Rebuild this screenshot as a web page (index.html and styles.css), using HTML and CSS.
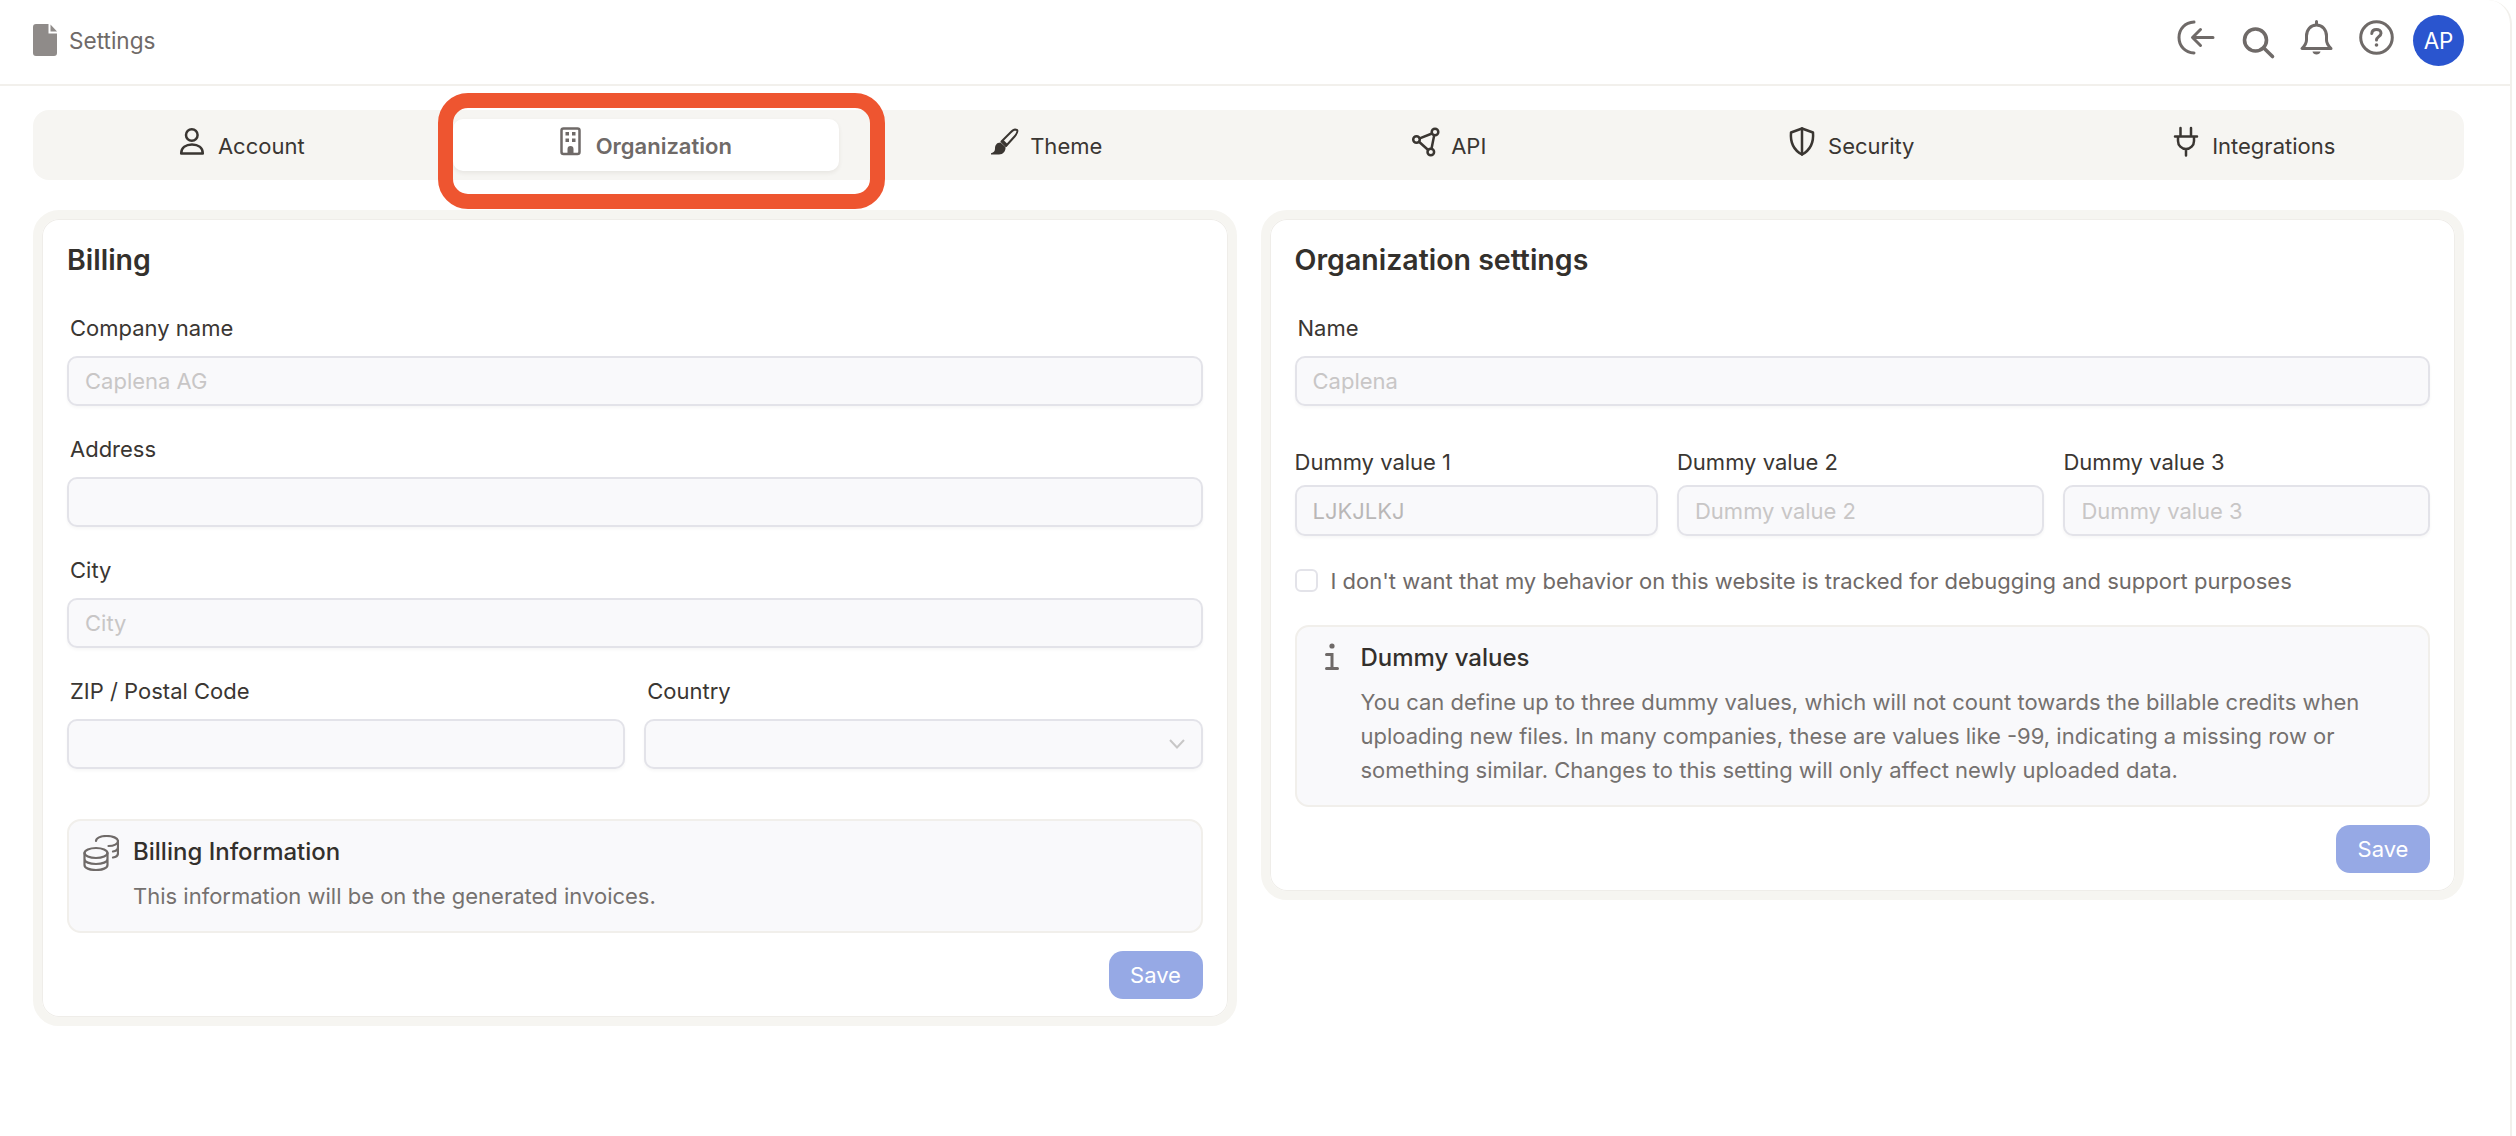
FILE: index.html
```html
<!DOCTYPE html>
<html lang="en">
<head>
  <meta charset="UTF-8">
  <meta name="viewport" content="width=device-width, initial-scale=1.0">
  <title>Settings</title>
  <link rel="stylesheet" href="styles.css">
</head>
<body>
  <div class="app">
    <header class="topbar">
      <div class="crumb">
        <svg class="doc-icon" width="24" height="32" viewBox="0 0 24 32"><path d="M3 0H15.500V9.500H24V29A3 3 0 0 1 21 32H3A3 3 0 0 1 0 29V3A3 3 0 0 1 3 0Z"/><path d="M17.500 0.500L24 7.500H17.500Z"/></svg>
        <span>Settings</span>
      </div>
      <div class="top-actions">
        <svg class="top-icon" width="40" height="40" viewBox="0 0 40 40"><path d="M18 2C9 2.500 3 9 3 17.500S9 32.500 18 33"/><path d="M37 17.500H17M24.500 9.500L16.500 17.500L24.500 25.500"/></svg>
        <svg class="top-icon search-icon" width="40" height="40" viewBox="0 0 40 40"><circle cx="19.500" cy="20" r="11"/><path d="M27.800 28L36.500 36.500"/></svg>
        <svg class="top-icon" width="40" height="40" viewBox="0 0 40 40"><path d="M20.500 1.500V5M20.500 5C14.500 5 10.500 10 10.500 16V20C10.500 24 8.500 26 6 28.500H35C32.500 26 30.500 24 30.500 20V16C30.500 10 26.500 5 20.500 5Z"/><path class="solid" d="M16.500 31.500H24.500C24 35.500 17 35.500 16.500 31.500Z"/></svg>
        <svg class="top-icon" width="40" height="40" viewBox="0 0 40 40"><circle cx="20.500" cy="17.500" r="15.800"/><path d="M15.800 13.500C16 10.800 18 9.500 20.500 9.500C23 9.500 25 11 25 13.300C25 16.500 20.500 16.800 20.500 20"/><circle class="solid" cx="20.500" cy="25" r="1.800"/></svg>
        <div class="avatar">AP</div>
      </div>
    </header>

    <main class="content">
      <nav class="tabs">
        <a class="tab">
          <svg class="tab-icon" width="32" height="32" viewBox="0 0 32 32"><circle cx="15.800" cy="10" r="5.800"/><path d="M5.200 28.500C5.200 22.500 10 19.500 16 19.500S26.800 22.500 26.800 28.500Z"/></svg>
          Account
        </a>
        <a class="tab active">
          <svg class="tab-icon" width="32" height="32" viewBox="0 0 32 32"><rect x="7.500" y="3.500" width="18" height="25.500" rx="2"/><path class="solid" d="M11.500 7H15V10.500H11.500ZM18 7H21.500V10.500H18ZM11.500 13.500H15V17H11.500ZM18 13.500H21.500V17H18ZM13.500 29V24A3 3 0 0 1 19.500 24V29Z"/></svg>
          Organization
        </a>
        <a class="tab">
          <svg class="tab-icon brush-icon" width="32" height="32" viewBox="0 0 32 32"><path d="M27 4.500C25.500 4.500 24 6 22.500 7.500L13.500 16.500L18 21L27 11C28.500 9 30 6 29 5Z"/><path class="solid" d="M12.500 17.500C8.500 17.500 7 20.500 7 23.500C7 26 6 27.500 3 28.200V29.500H11C15 29.500 18 26 17.500 22ZM15.500 15L20 19.500L18 21.500L13.500 17Z"/></svg>
          Theme
        </a>
        <a class="tab">
          <svg class="tab-icon" width="32" height="32" viewBox="0 0 32 32"><circle cx="26" cy="7" r="3.300"/><circle cx="7.500" cy="14.500" r="3.300"/><circle cx="21.800" cy="27" r="3.300"/><path d="M23 8.500L10.700 13.300M10 16.800L19.200 25M25.200 10.200L22.500 23.800"/></svg>
          API
        </a>
        <a class="tab">
          <svg class="tab-icon" width="32" height="32" viewBox="0 0 32 32"><path d="M16 3.500L27 7.500C27.800 17 24.500 25 16 29.500C7.500 25 4.200 17 5 7.500Z"/><path d="M16 3.500V29.500"/></svg>
          Security
        </a>
        <a class="tab">
          <svg class="tab-icon" width="32" height="32" viewBox="0 0 32 32"><path d="M10.500 3V10M21 3V10M5 11.500H27M8 11.500V16A8 8 0 0 0 24 16V11.500M16 24V30.500"/></svg>
          Integrations
        </a>
      </nav>

      <div class="cards">
        <section class="card">
          <h2>Billing</h2>
          <div class="fields">
            <div class="field">
              <label class="inset">Company name</label>
              <input type="text" placeholder="Caplena AG" disabled>
            </div>
            <div class="field">
              <label class="inset">Address</label>
              <input type="text" disabled>
            </div>
            <div class="field">
              <label class="inset">City</label>
              <input type="text" placeholder="City" disabled>
            </div>
            <div class="field-row">
              <div class="field">
                <label class="inset">ZIP / Postal Code</label>
                <input type="text" disabled>
              </div>
              <div class="field">
                <label class="inset">Country</label>
                <div class="select">
                  <svg width="16" height="10" viewBox="0 0 16 10"><path d="M1 1L8 8.500L15 1"/></svg>
                </div>
              </div>
            </div>
          </div>
          <div class="info billing-info">
            <svg class="info-icon" width="36" height="36" viewBox="0 0 36 36"><ellipse cx="13" cy="18" rx="11.500" ry="5"/><path d="M1.500 18V30C1.500 33 6.500 35 13 35S24.500 33 24.500 30V18M1.500 24C1.500 27 6.500 29 13 29S24.500 27 24.500 24"/><path d="M13 6C13 3 17.500 1 23.500 1S35 3 35 6S31 11 25.500 11M35 6V18C35 20 33 22 30 22.500M35 12C35 14 33 16 30 16.500"/></svg>
            <div class="info-text">
              <h3>Billing Information</h3>
              <p>This information will be on the generated invoices.</p>
            </div>
          </div>
          <div class="card-foot"><button type="button">Save</button></div>
        </section>

        <section class="card">
          <h2>Organization settings</h2>
          <div class="field">
            <label class="inset">Name</label>
            <input type="text" placeholder="Caplena" disabled>
          </div>
          <div class="dummy-row">
            <div class="field compact">
              <label>Dummy value 1</label>
              <input type="text" value="LJKJLKJ" disabled>
            </div>
            <div class="field compact">
              <label>Dummy value 2</label>
              <input type="text" placeholder="Dummy value 2" disabled>
            </div>
            <div class="field compact">
              <label>Dummy value 3</label>
              <input type="text" placeholder="Dummy value 3" disabled>
            </div>
          </div>
          <div class="check-row">
            <span class="checkbox"></span>
            <span>I don't want that my behavior on this website is tracked for debugging and support purposes</span>
          </div>
          <div class="info dummy-info">
            <svg class="info-icon i-icon" width="36" height="36" viewBox="0 0 36 36"><circle class="solid" cx="21" cy="5" r="2.600"/><path d="M15.500 13.500H21V27.500M15.500 27.500H26.500"/></svg>
            <div class="info-text">
              <h3>Dummy values</h3>
              <p>You can define up to three dummy values, which will not count towards the billable credits when uploading new files. In many companies, these are values like -99, indicating a missing row or something similar. Changes to this setting will only affect newly uploaded data.</p>
            </div>
          </div>
          <div class="card-foot"><button type="button">Save</button></div>
        </section>
      </div>
    </main>
  </div>
</body>
</html>
```

FILE: styles.css
```css
* {
  margin: 0;
  padding: 0;
  box-sizing: border-box;
}

body {
  background: #fff;
  font-family: 'Inter', sans-serif;
  font-size: 22px;
  color: #3a3632;
}

svg {
  display: block;
  flex-shrink: 0;
}

.app {
  min-height: 1136px;
  margin-right: 4px;
  border-right: 2px solid #f2f0ec;
  border-top-right-radius: 24px;
}

/* top bar */
.topbar {
  display: flex;
  justify-content: space-between;
  align-items: center;
  height: 86px;
  padding: 0 46px 4px 33px;
  border-bottom: 2px solid #f2f0ec;
}

.crumb {
  display: flex;
  align-items: center;
  gap: 12px;
  font-size: 22.6px;
  color: #6f6a68;
}

.doc-icon {
  fill: #8f8b89;
}

.top-actions {
  display: flex;
  align-items: center;
  gap: 20px;
}

.top-icon {
  fill: none;
  stroke: #6f6a68;
  stroke-width: 3;
  stroke-linecap: round;
  stroke-linejoin: round;
}

.search-icon {
  stroke-width: 3.600;
}

.top-icon .solid {
  fill: #6f6a68;
  stroke: none;
}

.avatar {
  display: flex;
  justify-content: center;
  align-items: center;
  width: 51px;
  height: 51px;
  margin-left: -3px;
  border-radius: 50%;
  background: #2a55cf;
  color: #fff;
  font-size: 22.4px;
}

/* tabs */
.content {
  padding: 24px 46px 0 33px;
}

.tabs {
  display: grid;
  grid-template-columns: repeat(6, 1fr);
  gap: 16px;
  height: 70px;
  padding: 9px 15px 9px 17px;
  border-radius: 16px;
  background: #f6f5f2;
}

.tab {
  position: relative;
  display: flex;
  justify-content: center;
  align-items: center;
  gap: 10px;
  padding: 1px 6px 0 0;
  border-radius: 10px;
  color: #3a3632;
}

.tab.active {
  background: #fff;
  box-shadow: 0 2px 4px rgba(60, 50, 40, 0.08);
  color: #6f6a68;
  font-weight: 600;
}

/* red marker drawn over the screenshot */
.tab.active::after {
  content: "";
  position: absolute;
  top: -26px;
  right: -46px;
  bottom: -38px;
  left: -15px;
  border: 15px solid #ee5530;
  border-radius: 30px;
}

.tab-icon {
  margin-top: -9px;
  fill: none;
  stroke: #3a3632;
  stroke-width: 2.500;
  stroke-linejoin: round;
  stroke-linecap: round;
}

.brush-icon {
  stroke-width: 2;
}

.active .tab-icon {
  stroke: #6f6a68;
}

.tab-icon .solid {
  fill: #3a3632;
  stroke: none;
}

.active .tab-icon .solid {
  fill: #6f6a68;
}

/* cards */
.cards {
  display: grid;
  grid-template-columns: 1fr 1fr;
  gap: 24px;
  align-items: start;
  margin-top: 30px;
}

.card {
  padding: 24px 25px 18px;
  border: 9px solid #f6f5f1;
  border-radius: 26px;
  background: #fff;
  box-shadow: inset 0 0 0 1px #efede9;
}

h2 {
  margin-bottom: 37px;
  font-size: 28.500px;
  font-weight: 600;
  line-height: 34px;
  color: #33302c;
}

.fields {
  display: flex;
  flex-direction: column;
  gap: 29px;
}

.field-row {
  display: grid;
  grid-template-columns: 1fr 1fr;
  gap: 19px;
}

label {
  display: block;
  height: 27px;
  margin-bottom: 15px;
  line-height: 29px;
}

label.inset {
  padding-left: 3px;
}

input,
.select {
  display: block;
  width: 100%;
  height: 50px;
  padding: 0 16px;
  border: 2px solid #e3e3e9;
  border-radius: 10px;
  background: #f9f9fb;
  box-shadow: 0 2px 3px rgba(60, 50, 40, 0.04);
  font-family: inherit;
  font-size: 22px;
  color: #c5c3c3;
}

input::placeholder {
  color: #c8c6c6;
  opacity: 1;
}

input:disabled {
  -webkit-text-fill-color: #b9b7b7;
}

input:disabled::placeholder {
  -webkit-text-fill-color: #c8c6c6;
}

.select {
  display: flex;
  justify-content: flex-end;
  align-items: center;
}

.select svg {
  fill: none;
  stroke: #c8c7c7;
  stroke-width: 2;
}

.dummy-row {
  display: grid;
  grid-template-columns: 363fr 367fr 366fr;
  gap: 19px;
  margin-top: 42px;
}

.compact label {
  margin-bottom: 10px;
}

.compact input {
  height: 51px;
}

.check-row {
  display: flex;
  align-items: center;
  gap: 13px;
  height: 23px;
  margin-top: 33px;
  color: #6f6a68;
}

.checkbox {
  width: 23px;
  height: 23px;
  border: 2px solid #e3e3e9;
  border-radius: 6px;
  background: #fff;
}

.info {
  display: flex;
  gap: 14px;
  padding: 14px 24px 18px 14px;
  border: 2px solid #f1efeb;
  border-radius: 14px;
  background: #f9f9fb;
}

.billing-info {
  margin-top: 50px;
}

.dummy-info {
  margin-top: 33px;
}

.info-icon {
  fill: none;
  stroke: #6f6a68;
  stroke-width: 2.200;
  stroke-linecap: round;
}

.i-icon {
  stroke-width: 3;
}

.info-icon .solid {
  fill: #6f6a68;
  stroke: none;
}

h3 {
  margin-bottom: 10px;
  font-size: 24px;
  font-weight: 500;
  line-height: 34px;
  color: #33302c;
}

.info-text p {
  line-height: 34px;
  color: #75716f;
}

.card-foot {
  display: flex;
  justify-content: flex-end;
  margin-top: 18px;
}

button {
  width: 94px;
  height: 48px;
  border: none;
  border-radius: 14px;
  background: #96a9e5;
  font-family: inherit;
  font-size: 22px;
  color: #fff;
}
```
